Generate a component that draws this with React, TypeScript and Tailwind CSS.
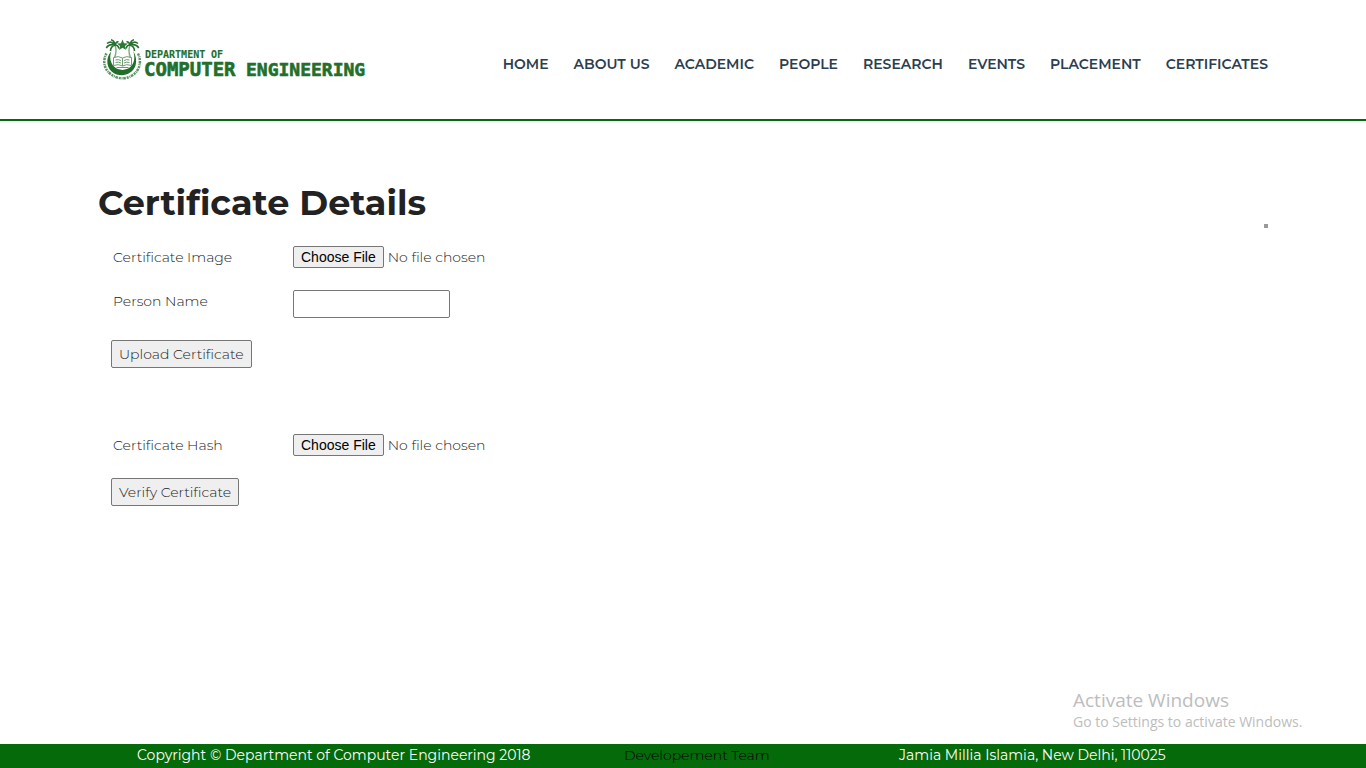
import React from "react";

const navItems = [
  "HOME",
  "ABOUT US",
  "ACADEMIC",
  "PEOPLE",
  "RESEARCH",
  "EVENTS",
  "PLACEMENT",
  "CERTIFICATES",
];

const fileInput =
  "h-[22px] w-60 text-sm leading-5 text-[#222222] file:mr-1 file:h-[22px] file:rounded-xs file:border file:border-solid file:border-[#767676] file:bg-[#efefef] file:px-[7px] file:font-['Liberation_Sans',sans-serif] file:text-sm file:leading-5 file:font-normal file:text-black";

const button =
  "h-7 rounded-xs border border-[#767676] bg-[#efefef] px-[7px] text-sm font-light text-[#222222]";

function Logo() {
  return (
    <a href="#" className="ml-1 shrink-0">
      <svg
        width="266"
        height="44"
        viewBox="0 0 266 44"
        fill="none"
        role="img"
        aria-label="Department of Computer Engineering"
      >
        <path d="M4.500 15.500C1 21.500 1.600 29 6.500 34.200 14.300 42.300 27 42.300 34 34.200 38.500 29 39 21.500 36 15.500" stroke="#5d9364" strokeWidth="2.500" strokeDasharray="2 .8 1 .7 2.600 .9" />
        <path d="M9.300 13.300C2.800 20.600 4.500 31.300 12.300 35.500 20.500 39.700 31 35.700 33.500 27.500 35 22 33.700 17 31.200 13.300 33.200 19 32.600 24.700 28.800 28.600 24.400 33 16.400 33 12 28.600 8.200 24.700 7.300 19 9.300 13.300Z" fill="#1f6f28" />
        <path d="m20.500 1.500 1.500 3.800 4 .2-3.100 2.600 1.100 3.900-3.500-2.200-3.500 2.200 1.100-3.900-3.100-2.600 4-.2Z" fill="#2c7834" />
        <path d="M13 7.500Q15.300 12.500 12.500 20M28 7.500Q25.700 12.500 28.500 20" stroke="#7fab84" strokeWidth="1.400" />
        <path d="M13 7C10.500 3.500 7.500 3.500 5 5.500M13 7C9.500 6.200 6 7 4.300 10M13 7C10 8 8.500 10 8.500 13M13 7C12.500 4 11 2.200 9 1.800M13 7C13.800 4.500 15 3.500 16.500 3.800M13 7C15.500 7 16.500 8.500 17 10.500" stroke="#286f30" strokeWidth="1.600" />
        <path d="M28 7C30.500 3.500 33.500 3.500 36 5.500M28 7C31.500 6.200 35 7 36.700 10M28 7C31 8 32.500 10 32.500 13M28 7C28.500 4 30 2.200 32 1.800M28 7C27.200 4.500 26 3.500 24.500 3.800M28 7C25.500 7 24.500 8.500 24 10.500" stroke="#286f30" strokeWidth="1.600" />
        <path d="M11.500 19.500Q16.500 17.500 20.500 20 24.500 17.500 29.500 19.500V27.500Q24.500 25.500 20.500 28 16.500 25.500 11.500 27.500ZM20.500 20V28M13.500 22Q16.500 21 19 22.500M13.500 24.500Q16.500 23.500 19 25M22 22.500Q24.500 21 27.500 22M22 25Q24.500 23.500 27.500 24.500M14.500 29.500H26.500" stroke="#6b9c70" strokeWidth="1" />
        <g
          className="font-['DejaVu_Sans_Mono',monospace] font-bold"
          fill="#226f2b"
          stroke="#226f2b"
        >
          <g fontSize="10" strokeWidth="0.100">
            <text x="43" y="20">DEPARTMENT</text>
            <text x="109" y="20">OF</text>
          </g>
          <g strokeWidth="0.600">
            <text x="42" y="38" fontSize="19">COMPUTER</text>
            <text x="144" y="38" fontSize="18">ENGINEERING</text>
          </g>
        </g>
      </svg>
    </a>
  );
}

export default function App() {
  return (
    <div className="relative flex min-h-screen flex-col bg-white font-['Montserrat','Inter',sans-serif] text-sm font-light text-[#222222]">
      <header className="border-b-2 border-[#046a0a]">
        <div className="mx-auto flex h-[119px] max-w-[1170px] items-center justify-between">
          <Logo />
          <nav className="flex gap-[25px] pt-2 text-sm font-semibold text-[#2c3e50]">
            {navItems.map((item) => (
              <a key={item} href="#" className="whitespace-nowrap">
                {item}
              </a>
            ))}
          </nav>
        </div>
      </header>

      <main className="mx-auto w-full max-w-[1170px] flex-1 pt-[60px]">
        <div className="flex items-end justify-between">
          <h1 className="pb-1 text-[35px] leading-[43px] font-bold">Certificate Details</h1>
          <span className="size-1 bg-[#999999]" />
        </div>

        <form className="mt-[18px] ml-[13px] flex flex-col items-start gap-[22px]">
          <div className="flex items-start">
            <label htmlFor="image" className="w-[182px] pl-0.5 leading-[22px]">
              Certificate Image
            </label>
            <input id="image" type="file" className={fileInput} />
          </div>
          <div className="flex items-start">
            <label htmlFor="person" className="w-[182px] pl-0.5 leading-[22px]">
              Person Name
            </label>
            <input
              id="person"
              type="text"
              className="h-7 w-[157px] rounded-xs border border-[#767676] bg-white px-1"
            />
          </div>
          <button type="button" className={button}>
            Upload Certificate
          </button>
        </form>

        <form className="mt-[66px] ml-[13px] flex flex-col items-start gap-[22px]">
          <div className="flex items-start">
            <label htmlFor="hash" className="w-[182px] pl-0.5 leading-[22px]">
              Certificate Hash
            </label>
            <input id="hash" type="file" className={fileInput} />
          </div>
          <button type="button" className={button}>
            Verify Certificate
          </button>
        </form>
      </main>

      <aside className="absolute right-[57px] bottom-9 w-[236px] font-['Open_Sans',sans-serif] font-normal whitespace-nowrap text-[#bdbdbd]">
        <p className="text-[19px] leading-6">Activate Windows</p>
        <p className="text-sm leading-5">Go to Settings to activate Windows.</p>
      </aside>

      <footer className="bg-[#046a0a] text-white">
        <div className="mx-auto grid h-6 max-w-[1170px] grid-cols-[487fr_275fr_369fr] items-start pl-[39px] leading-[22px] font-normal">
          <p className="whitespace-nowrap">Copyright © Department of Computer Engineering 2018</p>
          <a href="#" className="font-light text-black">
            Developement Team
          </a>
          <p>Jamia Millia Islamia, New Delhi, 110025</p>
        </div>
      </footer>
    </div>
  );
}
